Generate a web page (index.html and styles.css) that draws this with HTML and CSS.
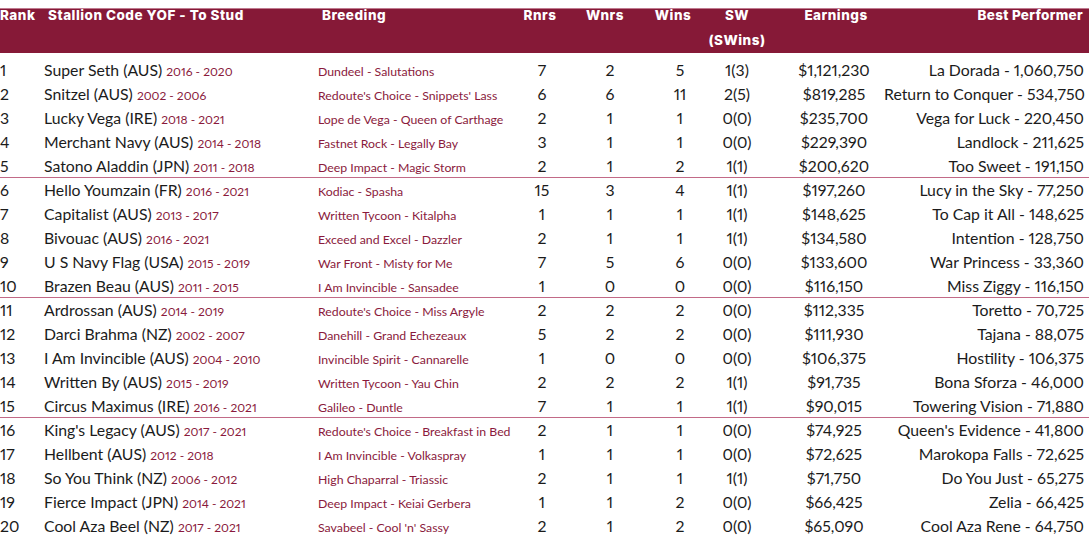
FILE: index.html
```html
<!DOCTYPE html>
<html lang="en">
<head>
<meta charset="utf-8">
<title>Leading Sires</title>
<link rel="stylesheet" href="styles.css">
</head>
<body>
<div class="table">
  <div class="head">
    <div class="h h-rank">Rank</div>
    <div class="h h-stallion">Stallion Code YOF - To Stud</div>
    <div class="h h-breeding">Breeding</div>
    <div class="h h-rnrs">Rnrs</div>
    <div class="h h-wnrs">Wnrs</div>
    <div class="h h-wins">Wins</div>
    <div class="h h-sw"><span class="l1">SW</span><span class="l2">(SWins)</span></div>
    <div class="h h-earn">Earnings</div>
    <div class="h h-best">Best Performer</div>
  </div>
  <div class="body">
    <div class="row"><div class="c rank">1</div><div class="c stallion">Super Seth (AUS) <span class="yrs">2016 - 2020</span></div><div class="c breeding">Dundeel - Salutations</div><div class="c num">7</div><div class="c num">2</div><div class="c num">5</div><div class="c num">1(3)</div><div class="c num earn">$1,121,230</div><div class="c best">La Dorada - 1,060,750</div></div>
    <div class="row"><div class="c rank">2</div><div class="c stallion">Snitzel (AUS) <span class="yrs">2002 - 2006</span></div><div class="c breeding">Redoute's Choice - Snippets' Lass</div><div class="c num">6</div><div class="c num">6</div><div class="c num">11</div><div class="c num">2(5)</div><div class="c num earn">$819,285</div><div class="c best">Return to Conquer - 534,750</div></div>
    <div class="row"><div class="c rank">3</div><div class="c stallion">Lucky Vega (IRE) <span class="yrs">2018 - 2021</span></div><div class="c breeding">Lope de Vega - Queen of Carthage</div><div class="c num">2</div><div class="c num">1</div><div class="c num">1</div><div class="c num">0(0)</div><div class="c num earn">$235,700</div><div class="c best">Vega for Luck - 220,450</div></div>
    <div class="row"><div class="c rank">4</div><div class="c stallion">Merchant Navy (AUS) <span class="yrs">2014 - 2018</span></div><div class="c breeding">Fastnet Rock - Legally Bay</div><div class="c num">3</div><div class="c num">1</div><div class="c num">1</div><div class="c num">0(0)</div><div class="c num earn">$229,390</div><div class="c best">Landlock - 211,625</div></div>
    <div class="row group-end"><div class="c rank">5</div><div class="c stallion">Satono Aladdin (JPN) <span class="yrs">2011 - 2018</span></div><div class="c breeding">Deep Impact - Magic Storm</div><div class="c num">2</div><div class="c num">1</div><div class="c num">2</div><div class="c num">1(1)</div><div class="c num earn">$200,620</div><div class="c best">Too Sweet - 191,150</div></div>
    <div class="row"><div class="c rank">6</div><div class="c stallion">Hello Youmzain (FR) <span class="yrs">2016 - 2021</span></div><div class="c breeding">Kodiac - Spasha</div><div class="c num">15</div><div class="c num">3</div><div class="c num">4</div><div class="c num">1(1)</div><div class="c num earn">$197,260</div><div class="c best">Lucy in the Sky - 77,250</div></div>
    <div class="row"><div class="c rank">7</div><div class="c stallion">Capitalist (AUS) <span class="yrs">2013 - 2017</span></div><div class="c breeding">Written Tycoon - Kitalpha</div><div class="c num">1</div><div class="c num">1</div><div class="c num">1</div><div class="c num">1(1)</div><div class="c num earn">$148,625</div><div class="c best">To Cap it All - 148,625</div></div>
    <div class="row"><div class="c rank">8</div><div class="c stallion">Bivouac (AUS) <span class="yrs">2016 - 2021</span></div><div class="c breeding">Exceed and Excel - Dazzler</div><div class="c num">2</div><div class="c num">1</div><div class="c num">1</div><div class="c num">1(1)</div><div class="c num earn">$134,580</div><div class="c best">Intention - 128,750</div></div>
    <div class="row"><div class="c rank">9</div><div class="c stallion">U S Navy Flag (USA) <span class="yrs">2015 - 2019</span></div><div class="c breeding">War Front - Misty for Me</div><div class="c num">7</div><div class="c num">5</div><div class="c num">6</div><div class="c num">0(0)</div><div class="c num earn">$133,600</div><div class="c best">War Princess - 33,360</div></div>
    <div class="row group-end"><div class="c rank">10</div><div class="c stallion">Brazen Beau (AUS) <span class="yrs">2011 - 2015</span></div><div class="c breeding">I Am Invincible - Sansadee</div><div class="c num">1</div><div class="c num">0</div><div class="c num">0</div><div class="c num">0(0)</div><div class="c num earn">$116,150</div><div class="c best">Miss Ziggy - 116,150</div></div>
    <div class="row"><div class="c rank">11</div><div class="c stallion">Ardrossan (AUS) <span class="yrs">2014 - 2019</span></div><div class="c breeding">Redoute's Choice - Miss Argyle</div><div class="c num">2</div><div class="c num">2</div><div class="c num">2</div><div class="c num">0(0)</div><div class="c num earn">$112,335</div><div class="c best">Toretto - 70,725</div></div>
    <div class="row"><div class="c rank">12</div><div class="c stallion">Darci Brahma (NZ) <span class="yrs">2002 - 2007</span></div><div class="c breeding">Danehill - Grand Echezeaux</div><div class="c num">5</div><div class="c num">2</div><div class="c num">2</div><div class="c num">0(0)</div><div class="c num earn">$111,930</div><div class="c best">Tajana - 88,075</div></div>
    <div class="row"><div class="c rank">13</div><div class="c stallion">I Am Invincible (AUS) <span class="yrs">2004 - 2010</span></div><div class="c breeding">Invincible Spirit - Cannarelle</div><div class="c num">1</div><div class="c num">0</div><div class="c num">0</div><div class="c num">0(0)</div><div class="c num earn">$106,375</div><div class="c best">Hostility - 106,375</div></div>
    <div class="row"><div class="c rank">14</div><div class="c stallion">Written By (AUS) <span class="yrs">2015 - 2019</span></div><div class="c breeding">Written Tycoon - Yau Chin</div><div class="c num">2</div><div class="c num">2</div><div class="c num">2</div><div class="c num">1(1)</div><div class="c num earn">$91,735</div><div class="c best">Bona Sforza - 46,000</div></div>
    <div class="row group-end"><div class="c rank">15</div><div class="c stallion">Circus Maximus (IRE) <span class="yrs">2016 - 2021</span></div><div class="c breeding">Galileo - Duntle</div><div class="c num">7</div><div class="c num">1</div><div class="c num">1</div><div class="c num">1(1)</div><div class="c num earn">$90,015</div><div class="c best">Towering Vision - 71,880</div></div>
    <div class="row"><div class="c rank">16</div><div class="c stallion">King's Legacy (AUS) <span class="yrs">2017 - 2021</span></div><div class="c breeding">Redoute's Choice - Breakfast in Bed</div><div class="c num">2</div><div class="c num">1</div><div class="c num">1</div><div class="c num">0(0)</div><div class="c num earn">$74,925</div><div class="c best">Queen's Evidence - 41,800</div></div>
    <div class="row"><div class="c rank">17</div><div class="c stallion">Hellbent (AUS) <span class="yrs">2012 - 2018</span></div><div class="c breeding">I Am Invincible - Volkaspray</div><div class="c num">1</div><div class="c num">1</div><div class="c num">1</div><div class="c num">0(0)</div><div class="c num earn">$72,625</div><div class="c best">Marokopa Falls - 72,625</div></div>
    <div class="row"><div class="c rank">18</div><div class="c stallion">So You Think (NZ) <span class="yrs">2006 - 2012</span></div><div class="c breeding">High Chaparral - Triassic</div><div class="c num">2</div><div class="c num">1</div><div class="c num">1</div><div class="c num">1(1)</div><div class="c num earn">$71,750</div><div class="c best">Do You Just - 65,275</div></div>
    <div class="row"><div class="c rank">19</div><div class="c stallion">Fierce Impact (JPN) <span class="yrs">2014 - 2021</span></div><div class="c breeding">Deep Impact - Keiai Gerbera</div><div class="c num">1</div><div class="c num">1</div><div class="c num">2</div><div class="c num">0(0)</div><div class="c num earn">$66,425</div><div class="c best">Zelia - 66,425</div></div>
    <div class="row"><div class="c rank">20</div><div class="c stallion">Cool Aza Beel (NZ) <span class="yrs">2017 - 2021</span></div><div class="c breeding">Savabeel - Cool 'n' Sassy</div><div class="c num">2</div><div class="c num">1</div><div class="c num">2</div><div class="c num">0(0)</div><div class="c num earn">$65,090</div><div class="c best">Cool Aza Rene - 64,750</div></div>
  </div>
</div>
</body>
</html>
```

FILE: styles.css
```css
html, body {
  margin: 0;
  padding: 0;
  background: #ffffff;
}

body {
  font-family: Lato, "Liberation Sans", sans-serif;
  color: #1b1b1b;
  width: 1089px;
  height: 555px;
  overflow: hidden;
  font-variant-numeric: proportional-nums;
}

.table {
  padding-top: 8px;
}

.head,
.row {
  display: grid;
  grid-template-columns: 44px 274px 190px 68px 68px 72px 42px 126px 200px 5px;
}

.head {
  height: 45px;
  background: #861937;
  border-top: 1px solid #c07a90;
  box-sizing: border-box;
  color: #ffffff;
  font-family: Inter, Lato, sans-serif;
  font-weight: 800;
  font-size: 13.5px;
  letter-spacing: 0.5px;
}

.h {
  line-height: 12px;
  white-space: nowrap;
}

.h-stallion,
.h-breeding {
  padding-left: 4px;
}

.h-rnrs { text-align: center; margin-right: 4px; }
.h-wnrs { text-align: center; margin-right: 10px; }
.h-wins { text-align: center; margin-right: 14px; }
.h-earn { text-align: center; padding-left: 30px; }
.h-best { text-align: right; margin-right: 1px; letter-spacing: 0.3px; }

.h-sw {
  display: flex;
  flex-direction: column;
  align-items: center;
}

.h-sw .l2 {
  margin-top: 11px;
  line-height: 16px;
}

.body {
  padding-top: 5px;
}

.row {
  height: 24px;
  line-height: 24px;
  font-size: 15.8px;
  white-space: nowrap;
  align-items: baseline;
}

.row.group-end {
  box-sizing: border-box;
  padding-top: 3px;
  line-height: 18px;
  border-bottom: 1px solid #c26a87;
}

.c {
  white-space: nowrap;
}

.rank,
.stallion {
  text-align: left;
}

.yrs {
  color: #8a1a3c;
  font-size: 12px;
}

.breeding {
  color: #8a1a3c;
  font-size: 12.3px;
}

.num {
  text-align: center;
}

.earn {
  padding-left: 26px;
}

.best {
  text-align: right;
}
```
